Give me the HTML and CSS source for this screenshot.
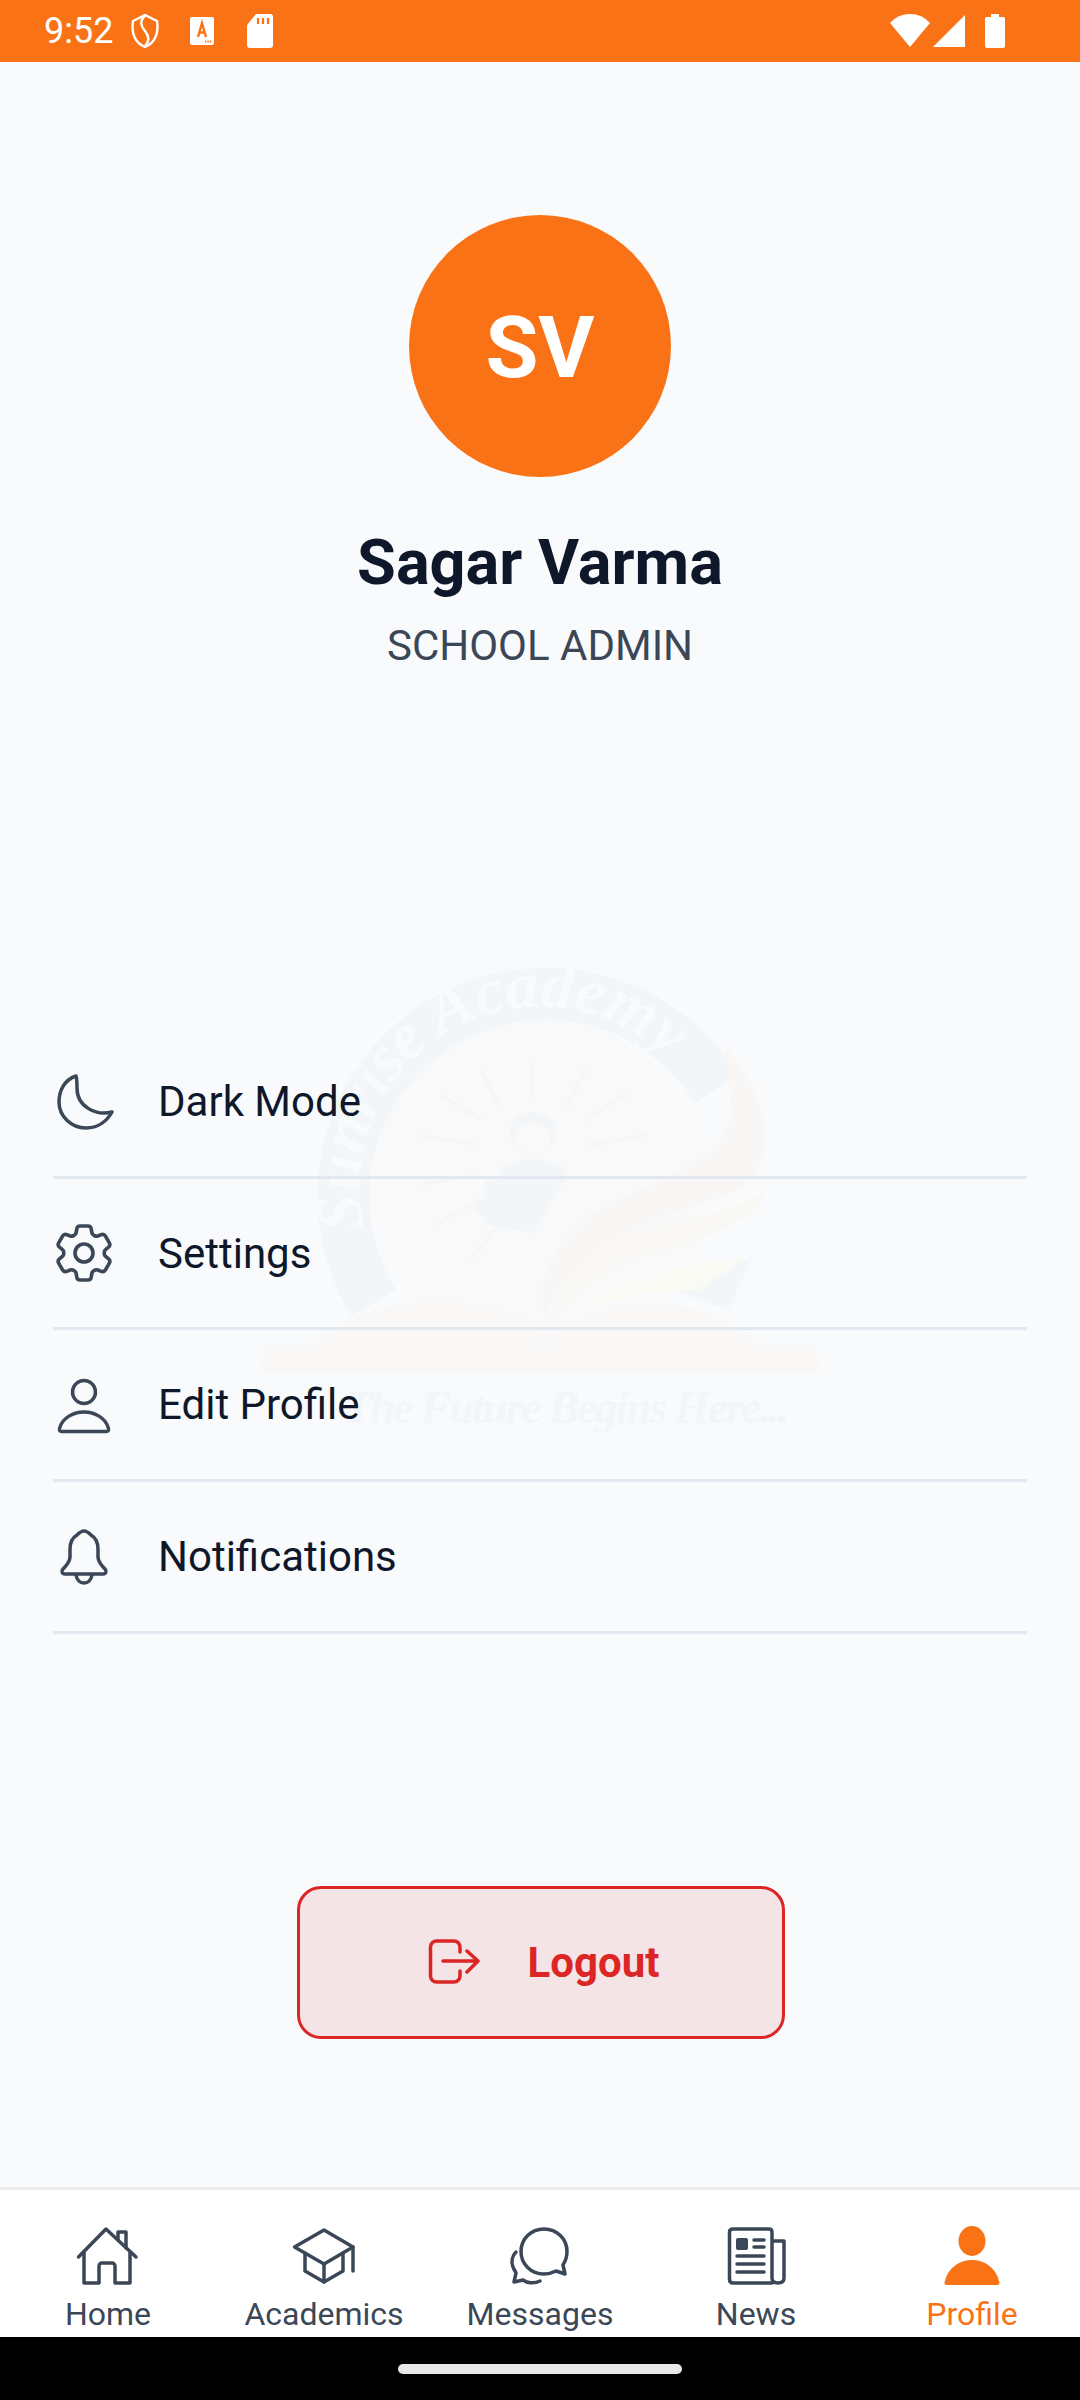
FILE: index.html
```html
<!DOCTYPE html>
<html lang="en">
<head>
    <meta charset="UTF-8">
    <meta name="viewport" content="width=device-width, initial-scale=1.0">
    <title>Profile</title>
    <link rel="stylesheet" href="styles.css">
</head>
<body>
    <div class="status-bar">
        <span class="status-time">9:52</span>
        <svg class="st-shield" viewBox="0 0 30 36"><path d="M15 2 L27 8 C29 20 25 30 15 34 C5 30 1 20 3 8 Z" fill="none" stroke="#fff" stroke-width="2.4" stroke-linejoin="round"/><path d="M15 3 C9 8 11 13 15 18 C19 23 20 28 15 33" fill="none" stroke="#fff" stroke-width="2.4"/></svg>
        <svg class="st-a" viewBox="0 0 24 28"><rect x="0" y="0" width="24" height="28" rx="2" fill="#fff"/><path d="M8 20 L12 6 L16 20 M9.5 15.5 H14.5" fill="none" stroke="#f97316" stroke-width="2.4"/><path d="M15 24.5 H22" stroke="#f97316" stroke-width="2" stroke-dasharray="1.4 1"/></svg>
        <svg class="st-sd" viewBox="0 0 26 34"><path d="M9 0 H23 Q26 0 26 3 V31 Q26 34 23 34 H3 Q0 34 0 31 V11 Z" fill="#fff"/><path d="M11 4 V10 M16 4 V10 M21 4 V10" stroke="#f97316" stroke-width="2.2"/></svg>
        <span class="status-gap"></span>
        <svg class="st-wifi" viewBox="0 0 40 34"><path d="M20 33 L0 9 Q8 0 20 0 Q32 0 40 9 Z" fill="#fff"/></svg>
        <svg class="st-signal" viewBox="0 0 32 32"><path d="M32 0 V32 H0 Z" fill="#fff"/></svg>
        <svg class="st-battery" viewBox="0 0 20 34"><path d="M6 3 V0 H14 V3 H18 Q20 3 20 5 V32 Q20 34 18 34 H2 Q0 34 0 32 V5 Q0 3 2 3 Z" fill="#fff"/></svg>
    </div>

    <main class="profile-page">
        <!-- school logo behind the menu -->
        <svg class="watermark" viewBox="250 950 580 520">
            <circle cx="540" cy="1187" r="167" fill="#f9f9f9"/>
            <path d="M374 1303 A202 202 0 1 1 717 1089" fill="none" stroke="#f3f6f9" stroke-width="52"/>
            <path id="wm-arc" d="M365 1228 A180 180 0 0 1 670 1062" fill="none"/>
            <text class="wm-title"><textPath href="#wm-arc" textLength="465">Sunrise Academy</textPath></text>
            <g transform="matrix(1.148 0 0 1 -35.5 0)">
                <path d="M617 1290 L687 1257 L665 1310 Z" fill="#f3f6f9"/>
                <g stroke="#f4f6f8" stroke-width="3">
                    <path d="M495 1060 V1100 M540 1070 L525 1105 M450 1070 L465 1105 M415 1095 L450 1120 M575 1095 L540 1120 M395 1135 L445 1145 M595 1135 L545 1145 M395 1185 L445 1175 M410 1225 L450 1200 M440 1260 L465 1225"/>
                </g>
                <circle cx="495" cy="1132" r="20" fill="#f3f6f9"/>
                <circle cx="495" cy="1138" r="15" fill="#f9f9fa"/>
                <path d="M468 1168 Q495 1150 522 1168 L523 1182 L494 1195 L463 1182 Z" fill="#f3f6f9"/>
                <path d="M453 1180 L494 1192 L523 1180 L495 1233 L453 1225 Z" fill="#f3f6f9"/>
                <circle cx="453" cy="1208" r="8" fill="#f3f6f9"/>
                <path d="M663 1047 C705 1100 708 1170 672 1192 C610 1215 540 1240 505 1315 C498 1285 512 1245 545 1215 C595 1180 655 1170 668 1115 Z" fill="#f9f6f6"/>
                <path d="M697 1190 C695 1220 640 1240 600 1252 C560 1265 530 1290 515 1322 C512 1290 535 1255 575 1235 C620 1220 670 1215 697 1190 Z" fill="#f9f8f5"/>
                <path d="M682 1258 C640 1262 570 1275 525 1325 C560 1295 600 1290 640 1290 Z" fill="#fafaf5"/>
                <path d="M335 1320 Q420 1280 498 1325 L500 1345 L300 1345 Z" fill="#f9f8f7"/>
                <path d="M520 1328 Q600 1285 660 1320 L695 1345 L505 1345 Z" fill="#f9f8f7"/>
                <path d="M262 1345 H740 L746 1373 H256 Z" fill="#f9f8f6"/>
            </g>
            <text class="wm-tagline" x="344" y="1423" textLength="445">The Future Begins Here...</text>
        </svg>

        <section class="profile-head">
            <div class="avatar">SV</div>
            <h1 class="name">Sagar Varma</h1>
            <p class="role">SCHOOL ADMIN</p>
        </section>

        <ul class="menu">
            <li class="menu-item">
                <svg class="menu-icon" viewBox="0 0 60 60"><path d="M22 5 C10 9 5 20 5 31 C5 45 17 57 32 57 C44 57 53 50 58 41 C42 45 23 36 23 17 C23 12 23 8 22 5 Z"/></svg>
                <span>Dark Mode</span>
            </li>
            <li class="menu-item">
                <svg class="menu-icon icon-cog" viewBox="2 2 20 20"><path d="M9.594 3.94c.09-.542.56-.94 1.11-.94h2.593c.55 0 1.02.398 1.11.94l.213 1.281c.063.374.313.686.645.87.074.04.147.083.22.127.325.196.72.257 1.075.124l1.217-.456a1.125 1.125 0 0 1 1.37.49l1.296 2.247a1.125 1.125 0 0 1-.26 1.431l-1.003.827c-.293.241-.438.613-.43.992a7.723 7.723 0 0 1 0 .255c-.008.378.137.75.43.991l1.004.827c.424.35.534.955.26 1.43l-1.298 2.247a1.125 1.125 0 0 1-1.369.491l-1.217-.456c-.355-.133-.75-.072-1.076.124a6.47 6.47 0 0 1-.22.128c-.331.183-.581.495-.644.869l-.213 1.281c-.09.543-.56.94-1.11.94h-2.594c-.55 0-1.019-.398-1.11-.94l-.213-1.281c-.062-.374-.312-.686-.644-.87a6.52 6.52 0 0 1-.22-.127c-.325-.196-.72-.257-1.076-.124l-1.217.456a1.125 1.125 0 0 1-1.369-.49l-1.297-2.247a1.125 1.125 0 0 1 .26-1.431l1.004-.827c.292-.24.437-.613.43-.991a6.932 6.932 0 0 1 0-.255c.007-.38-.138-.751-.43-.992l-1.004-.827a1.125 1.125 0 0 1-.26-1.43l1.297-2.247a1.125 1.125 0 0 1 1.37-.491l1.216.456c.356.133.751.072 1.076-.124.072-.044.146-.086.22-.128.332-.183.582-.495.644-.869l.214-1.28Z"/><path d="M15 12a3 3 0 1 1-6 0 3 3 0 0 1 6 0Z"/></svg>
                <span>Settings</span>
            </li>
            <li class="menu-item">
                <svg class="menu-icon" viewBox="0 0 60 60"><circle cx="30" cy="17" r="11.5"/><path d="M8 56.5 C5 56.5 5 54 6 52 C9 43 19 37 30 37 C41 37 51 43 54 52 C55 54 55 56.5 52 56.5 Z"/></svg>
                <span>Edit Profile</span>
            </li>
            <li class="menu-item">
                <svg class="menu-icon" viewBox="0 0 60 60"><path d="M30 5 C33 5 35 7 37 9 C42 12 44 17 44 23 L44 31 C44 36 48 40 51 43 C53 45 52 48 49 48 L11 48 C8 48 7 45 9 43 C12 40 16 36 16 31 L16 23 C16 17 18 12 23 9 C25 7 27 5 30 5 Z"/><path d="M22 49 C23 54 26 57 30 57 C34 57 37 54 38 49"/></svg>
                <span>Notifications</span>
            </li>
        </ul>

        <button class="logout">
            <svg class="logout-icon" viewBox="0 0 52 48"><path d="M32 14 L32 9 A6 6 0 0 0 26 3 L8.5 3 A6 6 0 0 0 2.5 9 L2.5 38 A6 6 0 0 0 8.5 44 L26 44 A6 6 0 0 0 32 38 L32 33"/><path d="M15 23 L50 23 M39 13 L50 23 L39 34"/></svg>
            <span>Logout</span>
        </button>
    </main>

    <nav class="tab-bar">
        <div class="tab">
            <svg class="tab-icon" viewBox="0 0 64 60"><path d="M2.5 31 L30 3 L60 31"/><path d="M8 26 V57 H23 V40 a3 3 0 0 1 3 -3 H36 a3 3 0 0 1 3 3 V57 H54 V26"/><path d="M42 14 V6 H50 V22"/></svg>
            <span>Home</span>
        </div>
        <div class="tab">
            <svg class="tab-icon" viewBox="0 0 64 60"><path d="M32 4 L2.5 21 L32 38 L61 21 Z"/><path d="M13 27 V45 L32 56 L51 45 V27"/><path d="M32 38 V56"/><path d="M61 21 V45"/></svg>
            <span>Academics</span>
        </div>
        <div class="tab">
            <svg class="tab-icon" viewBox="0 0 64 60"><path d="M36 3 C23 3 13 13 13 25.5 C13 38 23 48 36 48 C41 48 45 46.5 48 45 L57 48 L55 39 C57.5 35 59 30.5 59 25.5 C59 13 49 3 36 3 Z"/><path d="M8 26 C4 30 3 36 5 41 C6 44 8 46 8 47 L6 56 L15 54 C19 57 26 58 32 55"/></svg>
            <span>Messages</span>
        </div>
        <div class="tab">
            <svg class="tab-icon" viewBox="0 0 64 60"><path d="M48 57 H9 Q5.5 57 5.5 53 V6 Q5.5 3 9 3 H45 Q48 3 48 6 V52 C48 55 50 57 54 57 Q60 57 60 52 V15 H48"/><rect x="12" y="12" width="12" height="12" rx="2" class="tab-fill"/><path d="M30 14 H40 M30 21 H40 M13 30 H40 M13 38 H40 M13 46 H40"/></svg>
            <span>News</span>
        </div>
        <div class="tab tab-active">
            <svg class="tab-icon" viewBox="0 0 64 60"><ellipse cx="32" cy="15" rx="13.5" ry="15" class="tab-fill"/><path d="M7 59 C4.5 59 4 57 5 55 C8 42 19 34 32 34 C45 34 56 42 59 55 C60 57 59.5 59 57 59 Z" class="tab-fill"/></svg>
            <span>Profile</span>
        </div>
    </nav>

    <div class="nav-strip"><div class="home-pill"></div></div>
</body>
</html>
```

FILE: styles.css
```css
* { box-sizing: border-box; }
html, body { margin: 0; padding: 0; }
body { width: 1080px; height: 2400px; overflow: hidden; display: flex; flex-direction: column; font-family: Roboto, "Liberation Sans", sans-serif; background-color: #f8fafc; color: #0f172a; }

.status-bar { height: 62px; flex: none; display: flex; align-items: center; padding: 0 75px 0 44px; background: #f97316; color: #fff; }
.status-time { font-size: 36px; width: 86px; }
.status-bar svg { flex: none; display: block; }
.st-shield { width: 30px; height: 36px; margin-right: 30px; }
.st-a { width: 24px; height: 28px; margin-right: 33px; }
.st-sd { width: 26px; height: 34px; }
.status-gap { flex: 1; }
.st-wifi { width: 40px; height: 34px; margin-right: 3px; }
.st-signal { width: 32px; height: 32px; margin-right: 20px; }
.st-battery { width: 20px; height: 34px; }

.profile-page { position: relative; flex: 1; display: flex; flex-direction: column; align-items: center; padding-top: 153px; }
.watermark { position: absolute; left: 250px; top: 888px; width: 580px; height: 520px; }
.wm-title { font-family: "Liberation Serif", serif; font-style: italic; font-weight: bold; font-size: 66px; fill: #f8fafc; }
.wm-tagline { font-family: "Liberation Serif", serif; font-style: italic; font-weight: bold; font-size: 46px; fill: #f3f6f8; }

.profile-head { position: relative; display: flex; flex-direction: column; align-items: center; }
.avatar { width: 262px; height: 262px; border-radius: 50%; background: #f97316; color: #fff; font-size: 86px; font-weight: 700; display: flex; align-items: center; justify-content: center; padding-top: 3px; }
.name { margin: 48px 0 0; font-size: 63px; line-height: 76px; font-weight: 700; color: #0f172a; }
.role { margin: 20px 0 0; font-size: 42px; line-height: 50px; color: #3b4757; }

.menu { position: relative; list-style: none; margin: 0; padding: 0; width: 974px; margin-top: 356px; }
.menu-item { height: 151.7px; display: flex; align-items: center; gap: 44px; padding-left: 1px; border-bottom: 3px solid #e2e8f0; font-size: 42px; }
.menu-icon { width: 60px; height: 60px; flex: none; fill: none; stroke: #3b4757; stroke-width: 3.5; stroke-linecap: round; stroke-linejoin: round; }
.icon-cog { stroke-width: 1.2; }

.logout { position: relative; width: 488px; height: 153px; margin: 252px 0 0 2px; display: flex; align-items: center; justify-content: center; gap: 48px; border: 3px solid #dc2626; border-radius: 24px; background: rgba(220, 38, 38, 0.1); color: #dc2626; font-family: inherit; font-size: 42px; font-weight: 700; padding: 0 0 0 5px; }
.logout-icon { width: 52px; height: 48px; fill: none; stroke: #dc2626; stroke-width: 3.5; stroke-linecap: round; stroke-linejoin: round; }

.tab-bar { height: 150px; flex: none; display: flex; background: #fff; border-top: 3px solid #f1ecec; }
.tab { width: 216px; display: flex; flex-direction: column; align-items: center; padding-top: 36px; font-size: 32px; line-height: 40px; color: #3b4757; }
.tab-icon { width: 64px; height: 60px; margin-bottom: 8px; flex: none; fill: none; stroke: #3b4757; stroke-width: 3.5; stroke-linecap: round; stroke-linejoin: round; }
.tab-fill { fill: #3b4757; stroke: none; }
.tab-active { color: #f97316; }
.tab-active .tab-fill { fill: #f97316; }

.nav-strip { height: 63px; flex: none; background: #000; display: flex; justify-content: center; padding-top: 27px; }
.home-pill { width: 284px; height: 10px; border-radius: 5px; background: #e8e8e8; }
```
